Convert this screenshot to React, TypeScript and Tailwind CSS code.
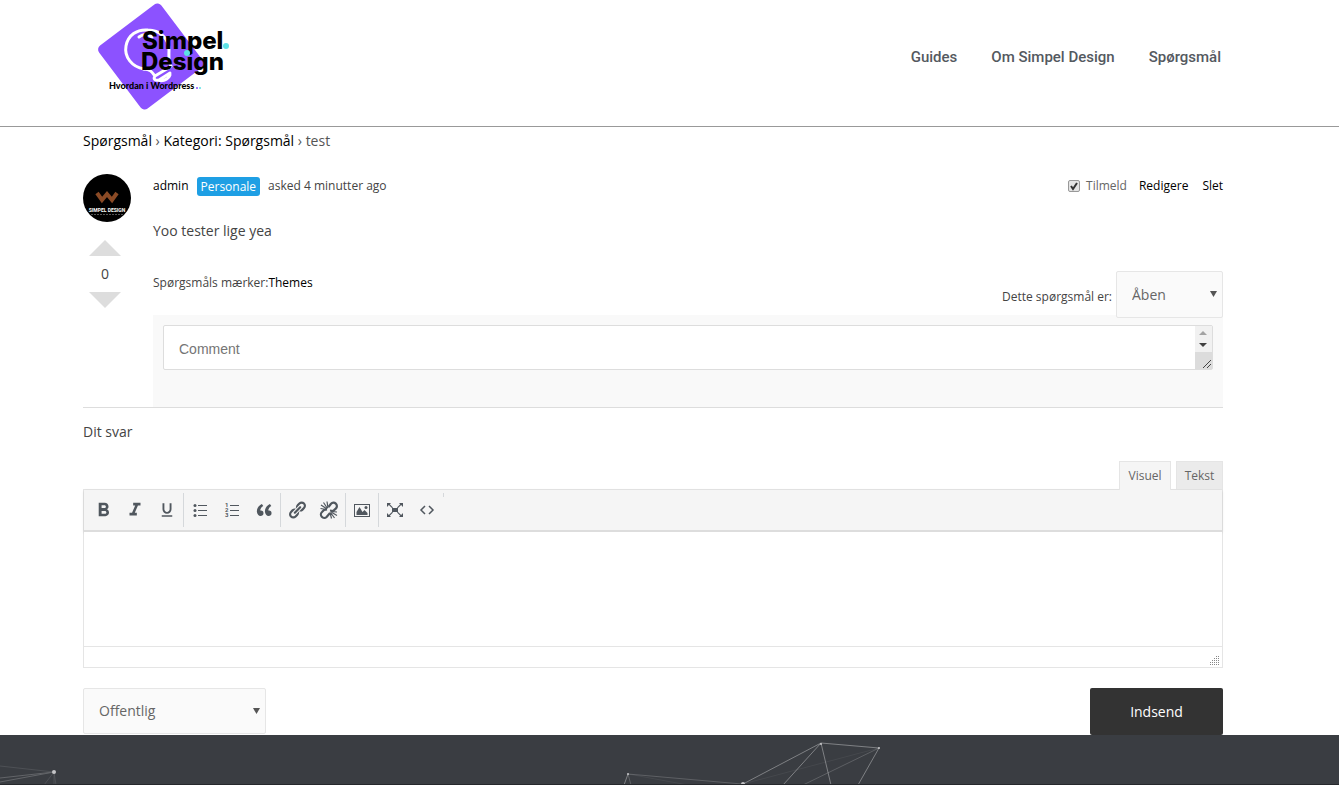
import type { ReactNode } from 'react';
import { MdFormatBold, MdFormatItalic, MdFormatUnderlined } from 'react-icons/md';

const navItems = [
  { href: '#guides', label: 'Guides' },
  { href: '#om', label: 'Om Simpel Design' },
  { href: '#sporgsmal', label: 'Spørgsmål' },
];

function Logo() {
  return (
    <svg width="145" height="113" viewBox="0 0 145 113" role="img" aria-label="Simpel Design">
      <rect x="25" y="17" width="78" height="79" rx="5" fill="#8c52ff" transform="rotate(-37 64 56.500)" />
      <g fill="none" stroke="#fff" strokeWidth="3" strokeLinecap="round" strokeLinejoin="round">
        <path d="M57 69C45 67 37 57 39 46c2-11 11-17 22-16 12 0 21 9 21 20 0 6-1 11 2 16" />
        <path d="M57 69c6 0 8 3 11 7l15-9M68 76c-2 3 0 5 4 4l11-7M72 80c2 2 9 0 11-5" />
        <path d="M52 37c4-3 9-3 13 0" />
      </g>
      <g fontFamily="Inter, sans-serif" fontWeight="800" fill="#000">
        <text x="55" y="49" fontSize="24">Simpel</text>
        <text x="54" y="70" fontSize="24">Design</text>
      </g>
      <text x="22" y="89" fontFamily="Lato, sans-serif" fontWeight="900" fontSize="9" fill="#000">
        Hvordan i Wordpress
      </text>
      <circle cx="100" cy="53" r="3" fill="#5ce1e6" />
      <circle cx="139" cy="46" r="3" fill="#5ce1e6" />
      <circle cx="110" cy="88" r="1" fill="#8c52ff" />
      <circle cx="113" cy="88" r="1" fill="#5ce1e6" />
    </svg>
  );
}

function Avatar() {
  return (
    <svg width="48" height="48" viewBox="0 0 48 48" role="img" aria-label="admin">
      <circle cx="24" cy="24" r="24" fill="#000" />
      <path d="M14 19l5 7 5-6 5 6 5-7" fill="none" stroke="#8a4a25" strokeWidth="4" />
      <text x="24" y="38" textAnchor="middle" fontFamily="Roboto, sans-serif" fontWeight="700" fontSize="5" fill="#fff">
        SIMPEL DESIGN
      </text>
      <path d="M8 40.500h32" stroke="#555" strokeWidth="1" strokeDasharray="2 1" />
    </svg>
  );
}

function Icon({ children }: { children: ReactNode }) {
  return (
    <svg width="20" height="20" viewBox="0 0 20 20" fill="currentColor" aria-hidden="true">
      {children}
    </svg>
  );
}

const bulletIcon = (
  <Icon>
    <circle cx="5" cy="5.500" r="1.500" />
    <circle cx="5" cy="10.500" r="1.500" />
    <circle cx="5" cy="15.500" r="1.500" />
    <path d="M8 5h9v1H8zM8 10h9v1H8zM8 15h9v1H8z" />
  </Icon>
);

const numberIcon = (
  <Icon>
    <g fontFamily="Roboto, sans-serif" fontWeight="700" fontSize="6">
      <text x="3" y="7">1</text>
      <text x="3" y="12">2</text>
      <text x="3" y="17">3</text>
    </g>
    <path d="M8 5h9v1H8zM8 10h9v1H8zM8 15h9v1H8z" />
  </Icon>
);

const quoteIcon = (
  <Icon>
    <path d="M9.490 13.220c0-.74-.2-1.380-.61-1.900-.62-.78-1.830-.88-2.530-.72-.29-1.650 1.110-3.750 2.920-4.650L7.880 4c-2.730 1.300-5.420 4.280-4.960 8.050C3.210 14.430 4.590 16 6.540 16c.85 0 1.560-.25 2.120-.75s.83-1.180.83-2.030zm8.050 0c0-.74-.2-1.380-.61-1.900-.63-.78-1.830-.88-2.530-.72-.29-1.650 1.110-3.750 2.920-4.650L15.930 4c-2.730 1.300-5.410 4.280-4.950 8.050.29 2.380 1.660 3.950 3.610 3.950.85 0 1.560-.25 2.120-.75s.83-1.180.83-2.030z" />
  </Icon>
);

const linkIcon = (
  <Icon>
    <path d="M17.740 2.760c1.680 1.690 1.680 4.410 0 6.100l-1.530 1.520c-1.120 1.120-2.700 1.470-4.140 1.090l2.620-2.610.76-.77.76-.76c.84-.84.84-2.200 0-3.040-.84-.85-2.200-.85-3.040 0l-.77.76-3.380 3.380c-.37-1.440-.02-3.020 1.100-4.140l1.520-1.530c1.690-1.680 4.420-1.680 6.100 0zM8.590 13.430l5.340-5.340c.42-.42.42-1.100 0-1.520-.44-.43-1.130-.39-1.530 0l-5.330 5.340c-.42.42-.42 1.100 0 1.520.44.43 1.130.39 1.520 0zm-.76 2.290l4.140-4.150c.38 1.440.03 3.020-1.090 4.140l-1.520 1.530c-1.690 1.680-4.410 1.680-6.100 0-1.680-1.680-1.680-4.420 0-6.100l1.530-1.520c1.120-1.120 2.700-1.470 4.140-1.100l-4.140 4.150c-.85.84-.85 2.200 0 3.050.84.84 2.200.84 3.040 0z" />
  </Icon>
);

const unlinkIcon = (
  <Icon>
    <path d="M9.500 7l2.500-3.200a3.300 3.300 0 0 1 5 4.600L14 11l-3-.5M8 9.500l-3 .5-2 2a3.300 3.300 0 0 0 4.600 5L11 13" fill="none" stroke="currentColor" strokeWidth="2.200" />
    <path d="M9 8L8 1.500M8.500 8.500L4.500 2.500M8 9L2 5M7.500 9.500L1.500 8.500M12 11.500l6 .5M12 12l6 3.500M11.500 12.500l4 5.500M11 12.500l1.500 6" fill="none" stroke="currentColor" strokeWidth="1.200" />
  </Icon>
);

const imageIcon = (
  <Icon>
    <path d="M2 4h16v13H2zM3 5v11h14V5z" fillRule="evenodd" />
    <path d="M4.500 15v-3l3-5 3 5 2-2 3 3v2z" />
    <circle cx="14" cy="7.500" r="1.500" />
  </Icon>
);

const fullscreenIcon = (
  <Icon>
    <path d="M7 8h6v4H7z" />
    <path d="M2 3h4L4.800 4.200 8 7.500l-.8.8-3.300-3.300L2 7zM18 3h-4l1.200 1.200L12 7.500l.8.8 3.300-3.300L18 7zM2 17h4l-1.200-1.200L8 12.500l-.8-.8L3.900 15 2 13zM18 17h-4l1.200-1.200-3.200-3.300.8-.8 3.300 3.300L18 13z" />
  </Icon>
);

const codeIcon = (
  <Icon>
    <path d="M8 6l-4 4 4 4M12 6l4 4-4 4" fill="none" stroke="currentColor" strokeWidth="1.500" />
  </Icon>
);

const toolGroups = [
  [
    { label: 'Fed', icon: <MdFormatBold size={23} /> },
    { label: 'Kursiv', icon: <MdFormatItalic size={22} /> },
    { label: 'Understreget', icon: <MdFormatUnderlined size={18} /> },
  ],
  [
    { label: 'Punktliste', icon: bulletIcon },
    { label: 'Nummereret liste', icon: numberIcon },
    { label: 'Citat', icon: quoteIcon },
  ],
  [
    { label: 'Indsæt link', icon: linkIcon },
    { label: 'Fjern link', icon: unlinkIcon },
  ],
  [{ label: 'Billede', icon: imageIcon }],
  [
    { label: 'Fuld skærm', icon: fullscreenIcon },
    { label: 'Kode', icon: codeIcon },
  ],
];

function Select({ id, options, className }: { id: string; options: string[]; className: string }) {
  return (
    <div className={`relative ${className}`}>
      <select
        id={id}
        aria-label={options[0]}
        className="h-full w-full appearance-none rounded-xs border border-[#e6e6e6] bg-[#fafafa] px-[15px] text-sm text-[#666]"
      >
        {options.map((option) => (
          <option key={option}>{option}</option>
        ))}
      </select>
      <svg className="pointer-events-none absolute top-5 right-[6px]" width="7" height="6" viewBox="0 0 7 6">
        <path d="M0 0h7L3.500 6z" fill="#555" />
      </svg>
    </div>
  );
}

function Header() {
  return (
    <header className="flex h-[127px] justify-between border-b border-[#999] pr-[118px] pl-[87px]">
      <a href="#top">
        <Logo />
      </a>
      <nav className="flex h-[114px] items-center gap-[34px] font-[Roboto,sans-serif] text-[15px] font-medium text-[#54595f]">
        {navItems.map((item) => (
          <a key={item.href} href={item.href}>
            {item.label}
          </a>
        ))}
      </nav>
    </header>
  );
}

function Question() {
  return (
    <article className="mt-[19px] flex border-b border-[#ddd]">
      <div className="flex w-[70px] flex-col items-start">
        <Avatar />
        <div className="mt-[18px] flex w-11 flex-col items-center text-sm">
          <button aria-label="Stem op">
            <svg width="32" height="16" viewBox="0 0 32 16" className="block">
              <path d="M16 0l16 16H0z" fill="#ddd" />
            </svg>
          </button>
          <span className="h-9 leading-9">0</span>
          <button aria-label="Stem ned">
            <svg width="32" height="16" viewBox="0 0 32 16" className="block">
              <path d="M0 0h32L16 16z" fill="#ddd" />
            </svg>
          </button>
        </div>
      </div>

      <div className="flex-1">
        <div className="flex h-6 items-center justify-between text-xs">
          <div className="flex items-center gap-2">
            <a href="#admin" className="text-black">admin</a>
            <span className="h-[19px] rounded-[3px] bg-[#1e9fe4] px-1 leading-[19px] font-medium text-white">Personale</span>
            <span>asked 4 minutter ago</span>
          </div>
          <div className="flex items-center">
            <label className="flex items-center gap-1.5 text-[#666]">
              <span className="relative block size-3">
                <input
                  type="checkbox"
                  defaultChecked
                  className="block size-3 appearance-none rounded-xs border border-[#999] bg-[#e4e4e4]"
                />
                <svg className="pointer-events-none absolute top-0 left-0" width="12" height="12" viewBox="0 0 12 12">
                  <path d="M3 6l2 3 4-6" fill="none" stroke="#333" strokeWidth="2" />
                </svg>
              </span>
              Tilmeld
            </label>
            <a href="#redigere" className="ml-3 text-black">Redigere</a>
            <a href="#slet" className="ml-3.5 text-black">Slet</a>
          </div>
        </div>

        <p className="mt-[21px] h-6 text-sm leading-6">Yoo tester lige yea</p>

        <div className="mt-7 flex justify-between text-xs">
          <p className="leading-6">
            Spørgsmåls mærker:<a href="#themes" className="text-black">Themes</a>
          </p>
          <div className="z-10 flex gap-1">
            <label htmlFor="status" className="pt-3.5 leading-6">
              Dette spørgsmål er:
            </label>
            <Select id="status" options={['Åben', 'Løst', 'Lukket']} className="h-[47px] w-[107px]" />
          </div>
        </div>

        <div className="-mt-[3px] h-[92px] bg-[#f9f9f9] px-2.5 pt-2.5">
          <div className="relative">
            <textarea
              placeholder="Comment"
              aria-label="Comment"
              className="block h-[45px] w-full resize-none overflow-hidden rounded-xs border border-[#ddd] bg-white px-[15px] py-[11px] font-['Liberation_Sans',sans-serif] text-sm leading-6 placeholder:text-[#757575]"
            />
            {/* scrollbar with resize corner */}
            <svg className="absolute top-px right-px" width="17" height="43" viewBox="0 0 17 43">
              <path d="M0 0h17v43H0z" fill="#f1f1f1" />
              <path d="M0 26h17v17H0z" fill="#dcdcdc" />
              <path d="M4 9h8L8 5z" fill="#a3a3a3" />
              <path d="M4 17h8l-4 4z" fill="#404040" />
              <path d="M8 42l8-8M12 42l4-4" stroke="#444" />
            </svg>
          </div>
        </div>
      </div>
    </article>
  );
}

function Editor() {
  return (
    <section>
      <h3 className="h-12 text-sm leading-[48px]">Dit svar</h3>
      <div className="mt-[5px] flex h-7 justify-end gap-[5px] text-xs text-[#666]">
        <button className="z-10 -mb-px h-[29px] w-[52px] border border-b-0 border-[#e5e5e5] bg-[#f5f5f5]">Visuel</button>
        <button className="w-[47px] border border-b-0 border-[#e5e5e5] bg-[#ebebeb]">Tekst</button>
      </div>
      <div className="border border-[#e5e5e5]">
        <div role="toolbar" className="flex h-[42px] border-b-2 border-[#ddd] bg-[#f5f5f5] px-[3px] pt-[3px] text-[#50575e] shadow-sm">
          <div className="flex h-[34px]">
            {toolGroups.map((group, index) => (
              <div key={index} className="flex border-r border-[#d5d8db] last:border-r-0">
                {group.map((tool) => (
                  <button key={tool.label} aria-label={tool.label} className="flex w-8 items-center justify-center">
                    {tool.icon}
                  </button>
                ))}
              </div>
            ))}
          </div>
          <span className="h-1 w-px bg-[#d5d8db]" />
        </div>
        <textarea aria-label="Dit svar" className="block h-[114px] w-full resize-none bg-white p-2.5 text-sm outline-none" />
        <div className="flex h-[21px] items-end justify-end border-t border-[#e5e5e5] p-0.5">
          <svg width="10" height="10" viewBox="0 0 10 10" shapeRendering="crispEdges">
            <path d="M0 9.500h10M0 7.500h10M2 5.500h8M4 3.500h6M6 1.500h4" stroke="#888" strokeDasharray="1 1" />
          </svg>
        </div>
      </div>
      <div className="mt-5 flex items-start justify-between">
        <Select id="privacy" options={['Offentlig', 'Privat']} className="h-[46px] w-[183px]" />
        <button className="h-[47px] w-[133px] rounded-xs bg-[#333] text-sm font-medium text-white">Indsend</button>
      </div>
    </section>
  );
}

function Footer() {
  return (
    <footer className="flex h-[50px] justify-between overflow-hidden border-b border-[#26282c] bg-[#3a3d42]">
      <svg width="60" height="50" viewBox="0 0 60 50">
        <g stroke="#fff" opacity=".2" fill="none">
          <path d="M0 43l54-6L0 47" />
          <path d="M0 31l54 6-10 13M54 37v13M54 37l2 13" opacity=".5" />
        </g>
        <circle cx="54" cy="37" r="2" fill="#c4c5c7" />
      </svg>
      <svg width="720" height="50" viewBox="0 0 720 50">
        <g stroke="#fff" fill="none">
          <path d="M124 49l78-41-38 42M202 8l10 42M202 8l58 5-21 37M9 39l-4 11" opacity=".35" />
          <path d="M9 39l114 10M9 39l3 11M184 50l76-37" opacity=".18" />
          <path d="M9 39l60 11M124 49l136-36" opacity=".06" />
        </g>
        <g fill="#c4c5c7">
          <circle cx="202" cy="9" r="1" />
          <circle cx="260" cy="13" r="1" />
          <circle cx="9" cy="39" r="1" />
          <circle cx="124" cy="49" r="2" />
        </g>
      </svg>
    </footer>
  );
}

export default function App() {
  return (
    <div className="bg-white font-['Open_Sans',sans-serif] text-[#444]">
      <Header />
      <main className="pr-[116px] pl-[83px]">
        <nav aria-label="Brødkrumme" className="h-7 text-sm leading-7 text-[#555]">
          <a href="#sporgsmal" className="text-black">Spørgsmål</a> › <a href="#kategori" className="text-black">Kategori: Spørgsmål</a> › test
        </nav>
        <Question />
        <Editor />
      </main>
      <Footer />
    </div>
  );
}
